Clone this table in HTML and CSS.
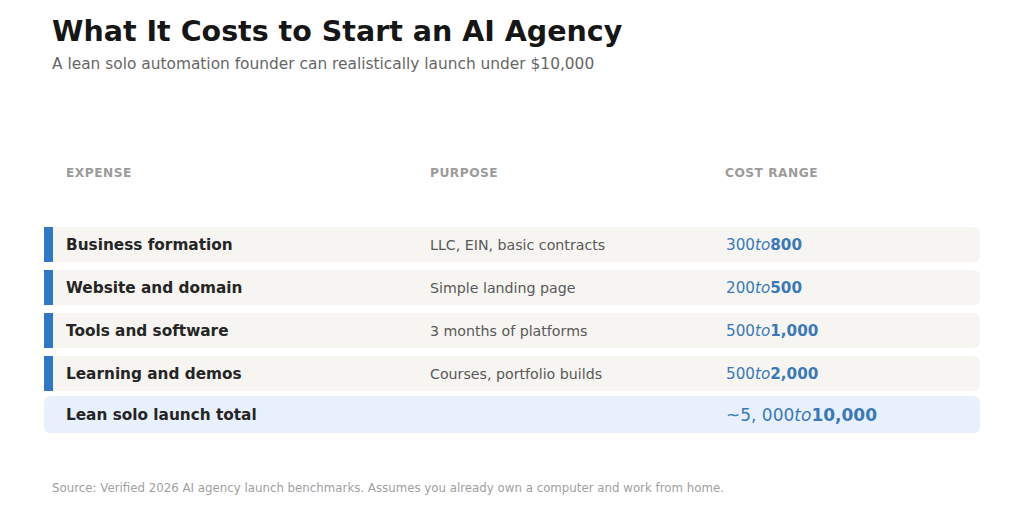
FILE: index.html
```html
<!DOCTYPE html>
<html>
<head>
<meta charset="utf-8">
<link rel="stylesheet" href="styles.css">
</head>
<body>
<div class="page">
  <header class="head">
    <h1 class="title">What It Costs to Start an AI Agency</h1>
    <p class="subtitle">A lean solo automation founder can realistically launch under $10,000</p>
  </header>
  <div class="table">
    <div class="row labels">
      <div>EXPENSE</div>
      <div>PURPOSE</div>
      <div>COST RANGE</div>
    </div>
    <div class="rows">
      <div class="row item">
        <div class="exp">Business formation</div>
        <div class="purp">LLC, EIN, basic contracts</div>
        <div class="cost">300<i>to</i><b>800</b></div>
      </div>
      <div class="row item">
        <div class="exp">Website and domain</div>
        <div class="purp">Simple landing page</div>
        <div class="cost">200<i>to</i><b>500</b></div>
      </div>
      <div class="row item">
        <div class="exp">Tools and software</div>
        <div class="purp">3 months of platforms</div>
        <div class="cost">500<i>to</i><b>1,000</b></div>
      </div>
      <div class="row item">
        <div class="exp">Learning and demos</div>
        <div class="purp">Courses, portfolio builds</div>
        <div class="cost">500<i>to</i><b>2,000</b></div>
      </div>
      <div class="row total">
        <div class="exp">Lean solo launch total</div>
        <div class="purp"></div>
        <div class="cost big">~5, 000<i>to</i><b>10,000</b></div>
      </div>
    </div>
  </div>
  <p class="source">Source: Verified 2026 AI agency launch benchmarks. Assumes you already own a computer and work from home.</p>
</div>
</body>
</html>
```

FILE: styles.css
```css
* { box-sizing: border-box; }
html, body { margin: 0; padding: 0; background: #ffffff; }
body { font-family: "DejaVu Sans", sans-serif; color: #1a1a1a; width: 1024px; height: 512px; overflow: hidden; }
.page { padding: 14px 44px 0 44px; }
.head { padding-left: 8px; }
.title { margin: 0; font-size: 28.5px; font-weight: bold; line-height: 35px; color: #161616; }
.subtitle { margin: 5px 0 0 0; font-size: 15.4px; line-height: 20px; color: #666666; }
.table { margin-top: 89px; width: 936px; }
.row { display: grid; grid-template-columns: 364px 295px 1fr; padding-left: 22px; align-items: center; }
.labels { font-size: 12.2px; font-weight: bold; color: #9b9b9b; letter-spacing: 0.5px; height: 20px; }
.rows { margin-top: 44px; display: flex; flex-direction: column; gap: 8px; }
.item { height: 35px; background: #f6f5f1; border-left: 9px solid #2f78c8; padding-left: 13px; border-radius: 0 6px 6px 0; }
.total { height: 37px; background: #e8f1fb; border-radius: 6px; margin-top: -3px; }
.exp { font-size: 15.3px; font-weight: bold; color: #252525; }
.purp { font-size: 14.2px; color: #595959; }
.cost { font-size: 15.2px; color: #3a78b8; padding-left: 1px; }
.cost i { font-style: italic; }
.cost b { font-weight: bold; }
.cost.big { font-size: 17px; }
.source { margin: 48px 0 0 8px; font-size: 11.8px; color: #a0a0a0; }
```
